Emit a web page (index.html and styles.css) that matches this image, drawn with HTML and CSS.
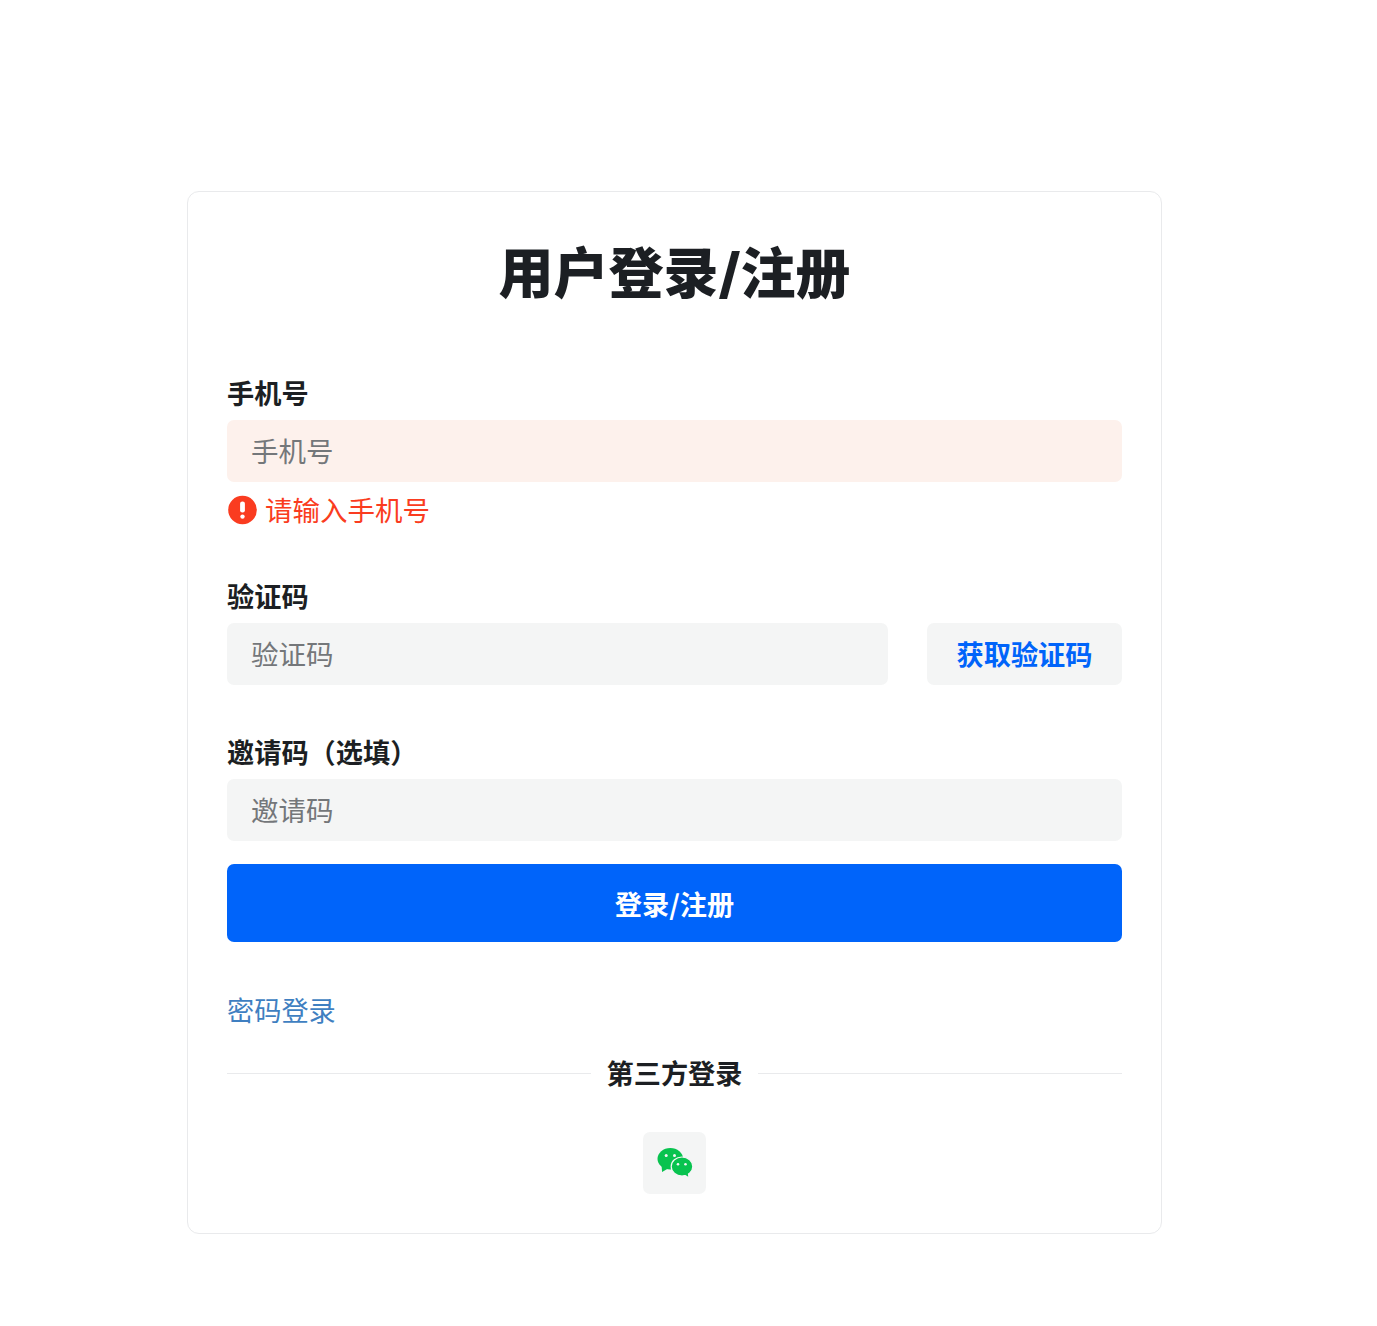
FILE: index.html
```html
<!DOCTYPE html>
<html lang="zh-CN">
<head>
    <meta charset="UTF-8">
    <meta name="viewport" content="width=device-width, initial-scale=1.0">
    <title>用户登录/注册</title>
    <link rel="stylesheet" href="styles.css">
</head>
<body>

    <div class="card">
        <h1>用户登录/注册</h1>

        <!-- Phone -->
        <div class="field">
            <label class="field-label" for="phone">手机号</label>
            <input id="phone" class="input-field input-error" type="text" placeholder="手机号">
            <div class="error-message">
                <svg class="error-icon" viewBox="0 0 30 30" aria-hidden="true">
                    <circle cx="15.500" cy="15" r="14.300" fill="#fa3c20"/>
                    <rect x="13.100" y="6.500" width="4.800" height="11" rx="2.200" fill="#fff"/>
                    <circle cx="15.500" cy="21.600" r="2.200" fill="#fff"/>
                </svg>
                <span>请输入手机号</span>
            </div>
        </div>

        <!-- Verification code -->
        <div class="field field-code">
            <label class="field-label" for="code">验证码</label>
            <div class="code-row">
                <input id="code" class="input-field" type="text" placeholder="验证码">
                <button class="code-btn" type="button">获取验证码</button>
            </div>
        </div>

        <!-- Invite code -->
        <div class="field field-last">
            <label class="field-label" for="invite">邀请码（选填）</label>
            <input id="invite" class="input-field" type="text" placeholder="邀请码">
        </div>

        <button class="btn" type="button">登录/注册</button>

        <a class="switch-link" href="#">密码登录</a>

        <div class="divider">
            <span>第三方登录</span>
        </div>

        <div class="third-party">
            <button class="wechat-btn" type="button" aria-label="微信登录">
                <svg viewBox="0 0 36 30" width="36" height="30" aria-hidden="true">
                    <ellipse cx="13.300" cy="10.700" rx="12.800" ry="10.700" fill="#08c34f"/>
                    <path fill="#08c34f" d="M4.500 17l.6 7 6-3.500z"/>
                    <ellipse cx="25" cy="18.500" rx="10.800" ry="9.500" fill="#08c34f" stroke="#f4f5f5" stroke-width="1.200"/>
                    <path fill="#08c34f" d="M27 26l4.200 2.800-.6-5z"/>
                    <circle cx="9.200" cy="7.600" r="1.500" fill="#f4f5f5"/>
                    <circle cx="17.500" cy="7.600" r="1.500" fill="#f4f5f5"/>
                    <circle cx="21" cy="16.300" r="1.300" fill="#f4f5f5"/>
                    <circle cx="28.500" cy="16.300" r="1.300" fill="#f4f5f5"/>
                </svg>
            </button>
        </div>
    </div>

</body>
</html>
```

FILE: styles.css
```css
* {
    box-sizing: border-box;
}

body {
    font-family: "Noto Sans CJK SC", sans-serif;
    margin: 0;
    padding: 191px 0 92px 187px;
    background-color: #fff;
    color: #1c1f23;
}

.card {
    width: 975px;
    height: 1043px;
    padding: 39px;
    background-color: #fff;
    border: 1px solid #e9eaec;
    border-radius: 12px;
}

h1 {
    margin: 8px 0 67px;
    font-family: "Inter", "Noto Sans CJK SC", sans-serif;
    font-size: 55px;
    line-height: 68px;
    font-weight: 800;
    text-align: center;
}

.field {
    margin-bottom: 49px;
}

.field-code {
    margin-bottom: 48px;
}

.field-last {
    margin-bottom: 23px;
}

.field-label {
    display: block;
    height: 41px;
    font-size: 27.2px;
    line-height: 37px;
    font-weight: 700;
    margin-bottom: 5px;
}

.input-field {
    display: block;
    width: 100%;
    height: 62px;
    padding: 0 24px 2px;
    background-color: #f4f5f5;
    border: none;
    border-radius: 7px;
    font-family: inherit;
    font-size: 27.5px;
    color: #1c1f23;
    outline: none;
}

.input-field::placeholder {
    color: #74777a;
    opacity: 1;
}

.input-error {
    background-color: #fdf1ec;
}

.error-message {
    display: flex;
    align-items: center;
    gap: 8px;
    margin-top: 9px;
    height: 37px;
    font-size: 27.5px;
    color: #fa3c20;
}

.error-message span {
    margin-bottom: 2px;
}

.error-icon {
    width: 30px;
    height: 30px;
    flex-shrink: 0;
}

.code-row {
    display: flex;
    gap: 39px;
}

.code-row .input-field {
    flex: 1;
}

.code-btn {
    width: 195px;
    height: 62px;
    padding: 0 0 2px;
    background-color: #f4f5f5;
    border: none;
    border-radius: 7px;
    font-family: inherit;
    font-size: 27.2px;
    font-weight: 700;
    color: #0064fa;
    cursor: pointer;
}

.btn {
    display: block;
    width: 100%;
    height: 78px;
    padding: 0;
    background-color: #0064fa;
    border: none;
    border-radius: 7px;
    font-family: inherit;
    font-size: 27.2px;
    font-weight: 700;
    color: #fff;
    cursor: pointer;
}

.switch-link {
    display: block;
    margin-top: 49px;
    height: 41px;
    font-size: 27.2px;
    line-height: 37px;
    color: #3f7fc1;
    text-decoration: none;
}

.divider {
    display: flex;
    align-items: center;
    gap: 16px;
    margin-top: 21px;
    height: 41px;
    font-size: 27.2px;
    font-weight: 700;
}

.divider span {
    margin-bottom: 4px;
}

.divider::before,
.divider::after {
    content: "";
    flex: 1;
    height: 1px;
    background-color: #e9eaec;
}

.third-party {
    display: flex;
    justify-content: center;
    margin-top: 38px;
}

.wechat-btn {
    display: flex;
    align-items: center;
    justify-content: center;
    width: 63px;
    height: 62px;
    padding: 0;
    background-color: #f4f5f5;
    border: none;
    border-radius: 7px;
    cursor: pointer;
}
```
